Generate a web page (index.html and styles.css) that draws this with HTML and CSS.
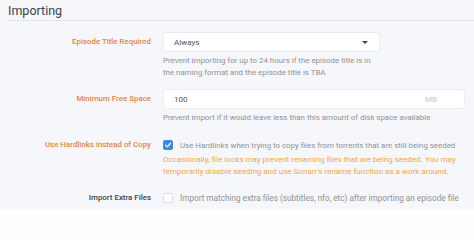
FILE: index.html
```html
<!DOCTYPE html>
<html>
<head>
<meta charset="utf-8">
<link rel="stylesheet" href="styles.css">
</head>
<body>
<div class="page">
  <div class="legend">Importing</div>
  <div class="rows">
    <div class="row row-select">
      <div class="label advanced">Episode Title Required</div>
      <div class="field">
        <div class="select"><span>Always</span><span class="caret"></span></div>
        <div class="help">Prevent importing for up to 24 hours if the episode title is in<br>the naming format and the episode title is TBA</div>
      </div>
    </div>
    <div class="row row-input">
      <div class="label advanced">Minimum Free Space</div>
      <div class="field">
        <div class="input wide"><span>100</span><span class="unit">MB</span></div>
        <div class="help">Prevent import if it would leave less than this amount of disk space available</div>
      </div>
    </div>
    <div class="row row-check">
      <div class="label advanced">Use Hardlinks instead of Copy</div>
      <div class="field">
        <div class="check-line"><span class="box checked"><svg viewBox="0 0 12 12" width="10" height="10"><path d="M2.2 6.2 L4.9 8.8 L9.8 3.4" fill="none" stroke="#fff" stroke-width="1.8" stroke-linecap="round" stroke-linejoin="round"/></svg></span><span class="check-text">Use Hardlinks when trying to copy files from torrents that are still being seeded</span></div>
        <div class="warn">Occasionally, file locks may prevent renaming files that are being seeded. You may<br>temporarily disable seeding and use Sonarr's rename function as a work around.</div>
      </div>
    </div>
    <div class="row row-check2">
      <div class="label">Import Extra Files</div>
      <div class="field">
        <div class="check-line"><span class="box"></span><span class="check-text extra">Import matching extra files (subtitles, nfo, etc) after importing an episode file</span></div>
      </div>
    </div>
  </div>
</div>
</body>
</html>
```
FILE: styles.css
```css
* { box-sizing: border-box; }
html, body { margin: 0; padding: 0; }
body {
  background: #fcfdfd;
  font-family: Roboto, "Liberation Sans", sans-serif;
  width: 474px;
  height: 215px;
  overflow: hidden;
}
.page {
  background: #f5f7fa;
  padding: 0 0 1px 8px;
}
.legend {
  font-size: 12.5px;
  color: #3a3f51;
  height: 21px;
  padding-top: 3px;
  line-height: 16px;
  border-bottom: 1px solid #e5e5e5;
}
.rows { display: flex; flex-direction: column; }
.row { display: flex; gap: 12px; }
.label {
  width: 143px;
  text-align: right;
  font-size: 7.9px;
  font-weight: 500;
  color: #3a3f51;
  line-height: 20px;
  white-space: nowrap;
}
.label.advanced { color: #f0813e; }
.field { display: flex; flex-direction: column; }
.row-select { margin-top: 11px; }
.row-input { margin-top: 10px; }
.row-check { margin-top: 11px; }
.row-check2 { margin-top: 10px; }
.select, .input {
  height: 20px;
  background: #fff;
  border: 1px solid #ebedf0;
  border-radius: 3px;
  display: flex;
  align-items: center;
  justify-content: space-between;
  font-size: 8px;
  color: #555;
  padding: 0 10px;
}
.select { width: 217px; }
.input.wide { width: 302px; }
.caret {
  width: 0; height: 0;
  border-left: 3px solid transparent;
  border-right: 3px solid transparent;
  border-top: 3px solid #444;
  margin-right: 1px;
}
.unit { color: #c4c6c9; margin-right: 17px; }
.help {
  font-size: 7.9px;
  line-height: 12px;
  color: #909293;
  margin-top: 3px;
  white-space: nowrap;
}
.check-line { display: flex; align-items: center; gap: 7px; height: 20px; }
.box {
  flex: none;
  width: 10px; height: 10px;
  border: 1px solid #dde0e4;
  background: #fff;
  border-radius: 2px;
  display: flex; align-items: center; justify-content: center;
}
.box.checked { background: #3c8ae0; border-color: #3c8ae0; }
.check-text { font-size: 7.9px; color: #909293; white-space: nowrap; }
.check-text.extra { font-size: 8.2px; }
.warn {
  font-size: 8.05px;
  line-height: 12px;
  color: #f5a73a;
  margin-top: -1px;
  white-space: nowrap;
}
```
